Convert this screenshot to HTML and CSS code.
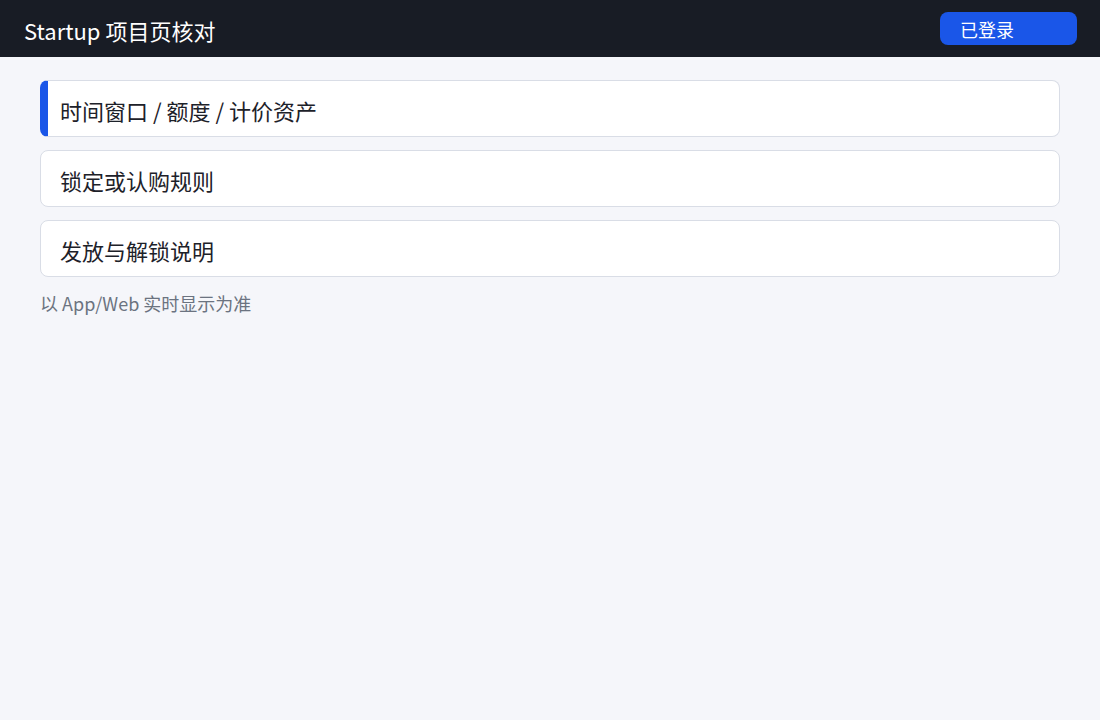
FILE: index.html
```html
<!DOCTYPE html>
<html lang="zh-CN">
<head>
<meta charset="utf-8">
<title>Startup 项目页核对</title>
<link rel="stylesheet" href="styles.css">
</head>
<body>
<header class="topbar">
  <div class="title">Startup 项目页核对</div>
  <button class="login">已登录</button>
</header>
<main class="content">
  <div class="card active">时间窗口 / 额度 / 计价资产</div>
  <div class="card">锁定或认购规则</div>
  <div class="card">发放与解锁说明</div>
  <p class="note">以 App/Web 实时显示为准</p>
</main>
</body>
</html>
```
FILE: styles.css
```css
* { box-sizing: border-box; }
html, body { margin: 0; padding: 0; }
body {
  background: #f5f6fa;
  font-family: "Noto Sans CJK SC", "Noto Sans", sans-serif;
  color: #1d2129;
  height: 720px;
}
.topbar {
  height: 57px;
  background: #181c25;
  display: flex;
  align-items: center;
  justify-content: space-between;
  padding: 0 23px 0 24px;
}
.title {
  color: #ffffff;
  font-size: 22px;
  line-height: 1;
  padding-top: 2px;
}
.login {
  width: 137px;
  height: 33px;
  border: none;
  border-radius: 8px;
  background: #1a56e8;
  color: #ffffff;
  font-family: inherit;
  font-size: 18px;
  text-align: left;
  padding: 0 0 0 20px;
  line-height: 1;
}
.content {
  padding: 23px 40px 0 40px;
  display: flex;
  flex-direction: column;
  gap: 13px;
}
.card {
  height: 57px;
  background: #ffffff;
  border: 1px solid #d9dde6;
  border-radius: 8px;
  display: flex;
  align-items: center;
  padding: 3px 0 0 19px;
  font-size: 22px;
  color: #1d2129;
}
.card.active {
  border-left: 8px solid #1a56e8;
  padding-left: 12px;
}
.note {
  margin: 0;
  font-size: 18px;
  color: #6b7380;
}
```
